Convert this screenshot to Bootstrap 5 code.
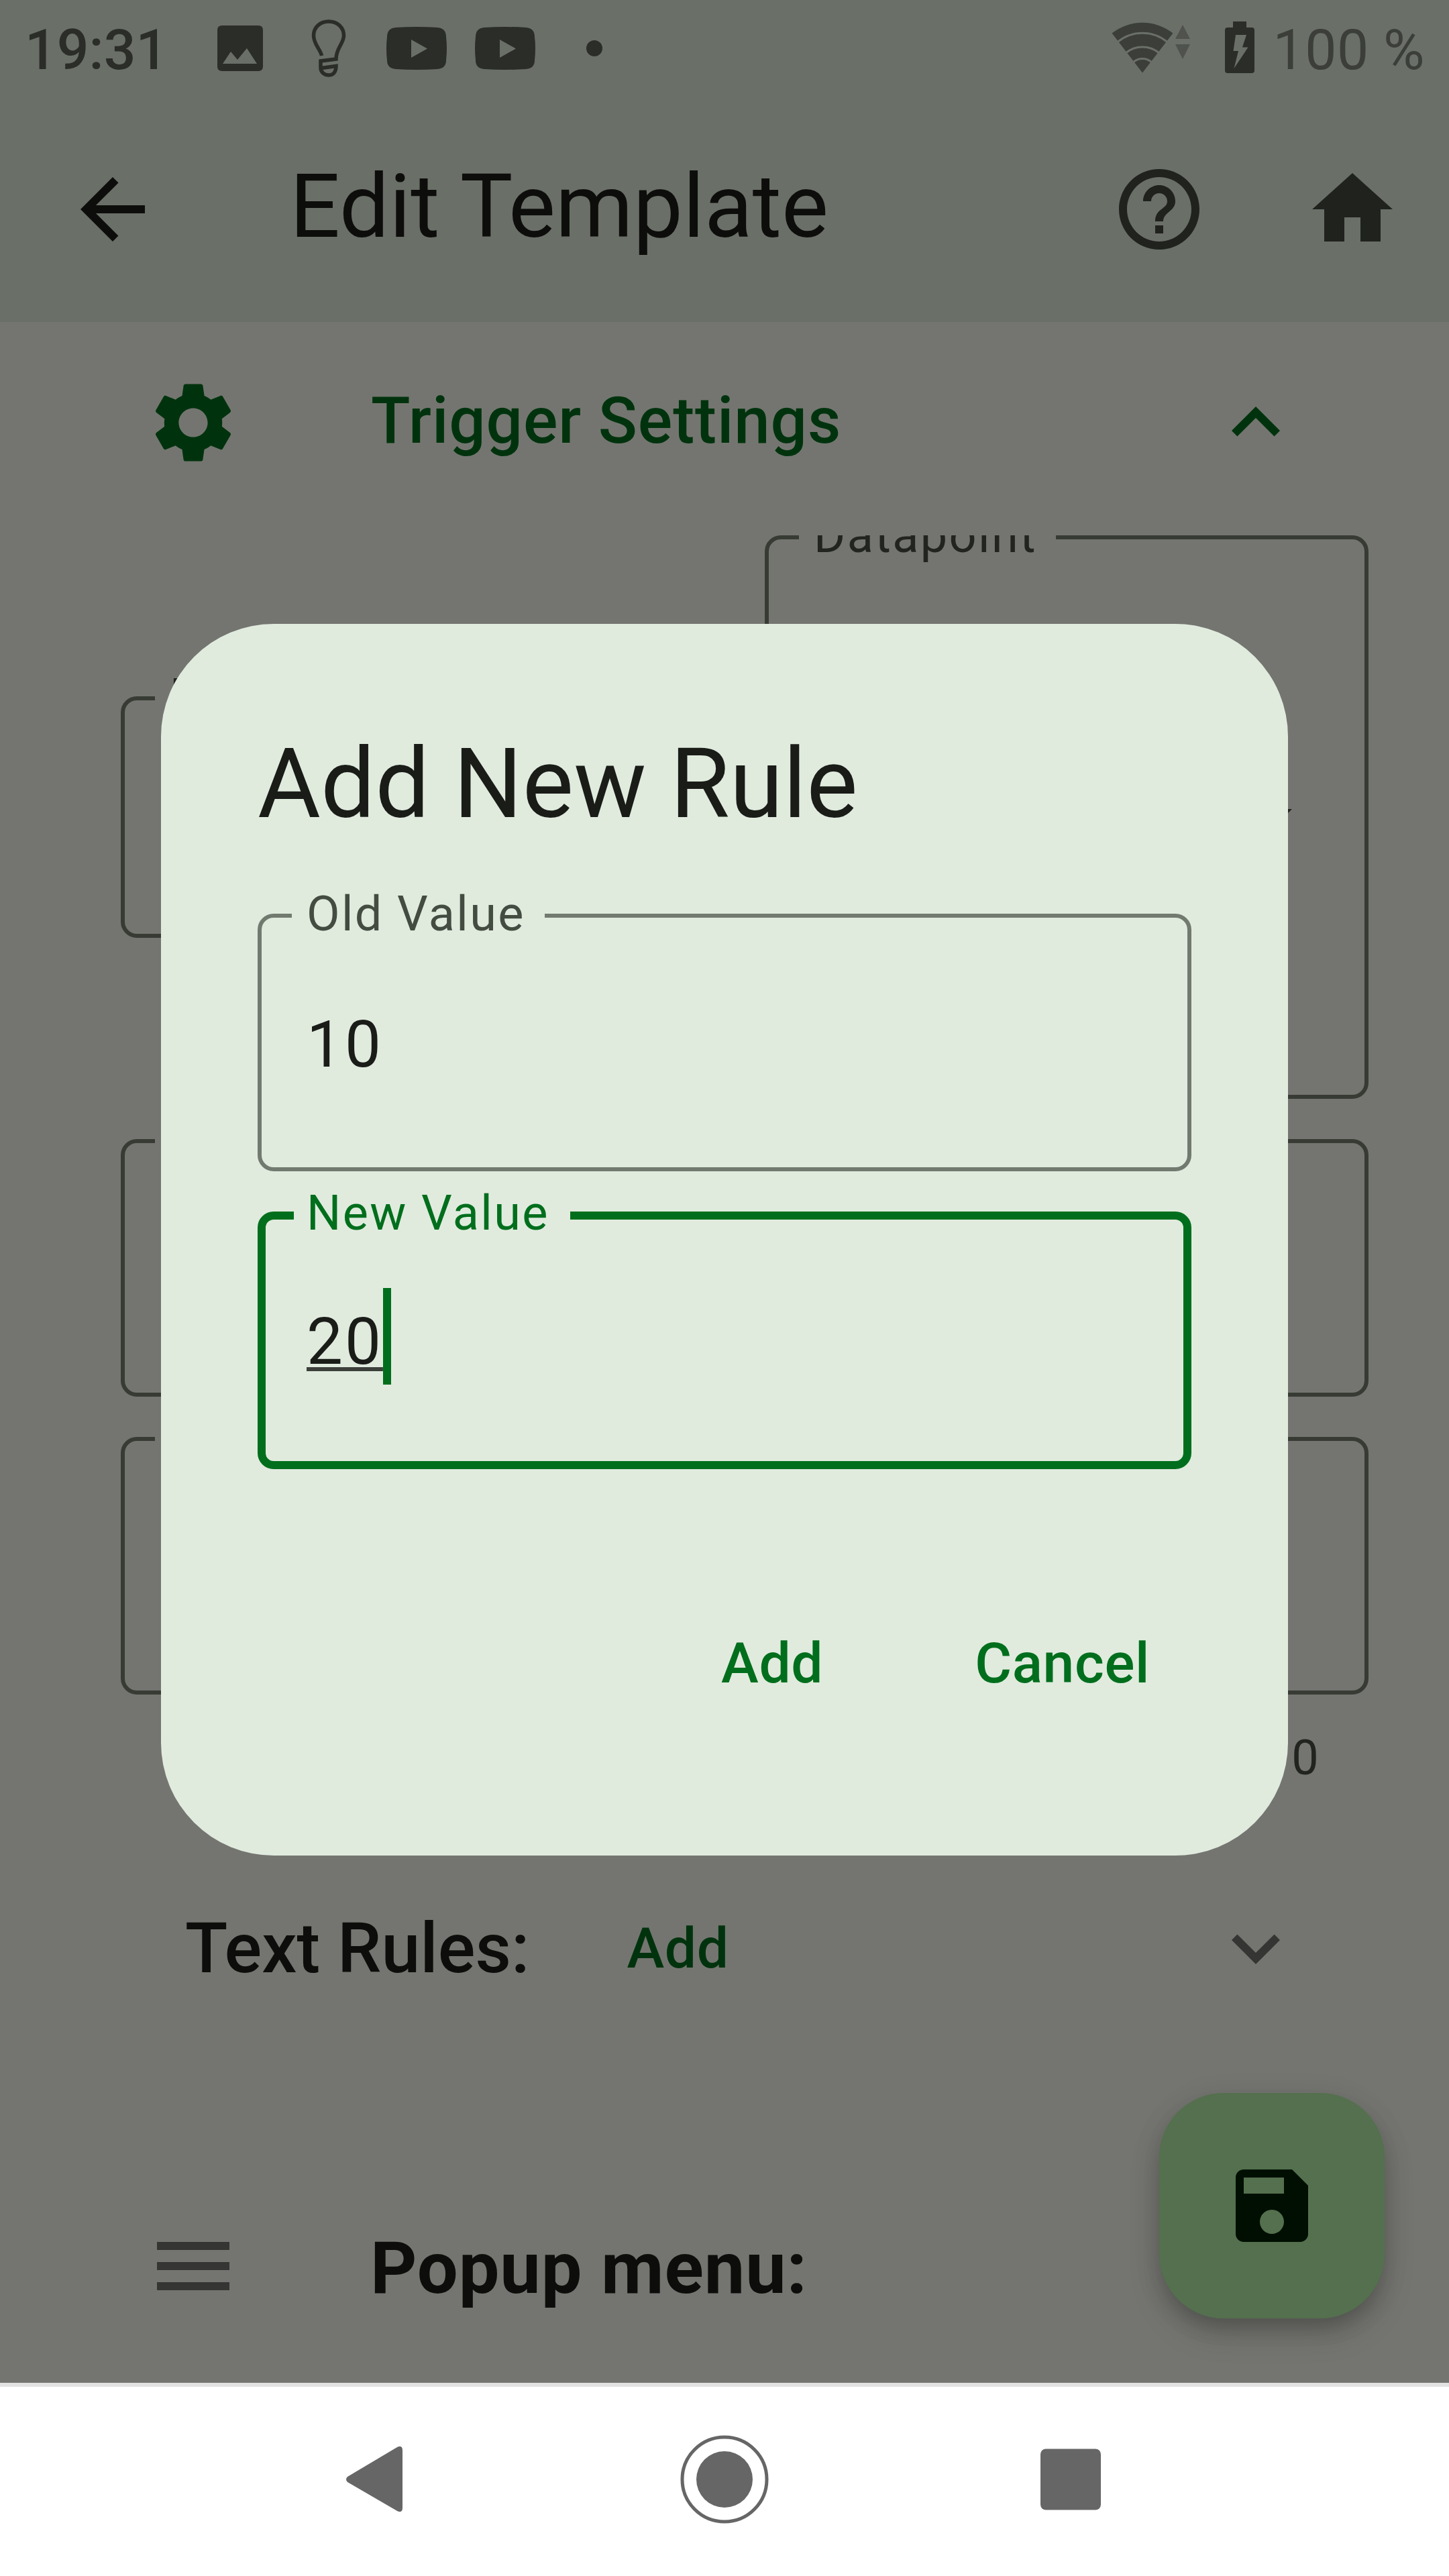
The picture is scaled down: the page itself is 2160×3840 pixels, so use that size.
<!DOCTYPE html>
<html lang="en">
<head>
<meta charset="utf-8">
<meta name="viewport" content="width=device-width, initial-scale=1">
<title>Edit Template</title>
<link href="https://cdn.jsdelivr.net/npm/bootstrap@5.3.0/dist/css/bootstrap.min.css" rel="stylesheet">
<style>
  :root { --body: #747570; --bar: #6a6f68; --sheet: #e0ebde; --green: #006e1c; --dimgreen: #00330d; }
  body { font-family: Roboto, "Liberation Sans", sans-serif; background: var(--body); width: 2160px; height: 3840px; overflow: hidden; color: #0d0e0b; line-height: 1.2; }
  svg { display: block; flex: none; }
  .ico { width: 144px; height: 144px; }
  .topbar { background: var(--bar); height: 480px; }
  .statusbar { height: 144px; padding: 0 36px 0 37px; color: #2b2d29; font-size: 84px; }
  .clock { font-weight: 500; padding-top: 7px; width: 287px; }
  .batt { color: #3b3e39; padding-top: 7px; margin-left: 22px; letter-spacing: .5px; }
  .appbar { height: 336px; padding: 0 72px 0 96px; }
  .home-ico { margin-left: 144px; }
  .page-title { font-size: 132px; font-weight: 400; margin: 0 0 0 192px; padding-bottom: 8px; }
  .section-head { height: 318px; padding: 0 216px 18px; color: var(--dimgreen); }
  .section-head .label-txt { font-size: 96px; font-weight: 500; margin-left: 193px; padding-bottom: 5px; letter-spacing: .9px; }
  .scroll-area { height: 2754px; overflow: hidden; padding: 0 120px 0 180px; }
  .field-pair { gap: 60px; margin-bottom: 60px; }
  .field { position: relative; border: 6px solid #373b34; border-radius: 24px; height: 384px; --cut: var(--body); }
  .field.mid { width: 900px; height: 360px; }
  .field.tall { width: 900px; height: 840px; padding-right: 66px; }
  .scroll-area > .field + .field { margin-top: 60px; }
  .field-label { position: absolute; left: 45px; top: -47px; line-height: 84px; font-size: 72px; letter-spacing: 2.4px; white-space: nowrap; color: #22241f; background: var(--cut); padding: 0 28px 0 22px; }
  .field-value { font-size: 96px; letter-spacing: 3px; color: #1a1c18; padding-left: 1px; }
  .counter { font-size: 72px; letter-spacing: 2.4px; line-height: 84px; margin-top: 53px; padding-right: 72px; color: #22241f; }
  .rules-row { height: 240px; margin-top: 121px; padding: 0 96px; }
  .rules-title { font-size: 104px; font-weight: 500; margin: 0; padding-top: 2px; }
  .rules-add { font-size: 84px; font-weight: 500; color: var(--dimgreen); padding-top: 3px; margin-left: 145px; letter-spacing: .6px; }
  .popup-row { height: 156px; margin-top: 276px; padding-left: 36px; }
  .popup-title { font-size: 108px; font-weight: 700; margin: 0 0 0 192px; padding-top: 8px; letter-spacing: .9px; }
  .fab { position: absolute; left: 1728px; top: 3120px; width: 336px; height: 336px; border-radius: 96px; background: #54704e; color: #010f02; box-shadow: 0 18px 30px -6px rgba(0,0,0,.18), 0 24px 50px rgba(0,0,0,.12), 0 6px 50px rgba(0,0,0,.06); }
  .sheet { position: absolute; left: 240px; top: 930px; width: 1680px; height: 1836px; border-radius: 168px; background: var(--sheet); padding: 144px; color: #1a1c18; }
  .sheet-title { font-size: 144px; line-height: 192px; font-weight: 400; margin: -1px 0 97px; }
  .sheet .field { --cut: var(--sheet); border-color: #727a6f; padding: 8px 66px 0; }
  .sheet .field-label { color: #444c42; padding-right: 29px; }
  .sheet .field.active { border: 12px solid var(--green); margin-top: 60px; padding: 6px 60px 0; }
  .sheet .active .field-label { color: var(--green); top: -51px; left: 42px; padding: 0 31px 0 19px; }
  .typed { padding: 0; margin-left: 1px; text-decoration: underline; text-decoration-color: #3c3f3a; text-decoration-thickness: 6px; text-underline-offset: 5px; text-decoration-skip-ink: none; }
  .caret { width: 12px; height: 144px; margin-bottom: 18px; background: var(--green); }
  .actions { margin-top: 170px; height: 240px; padding-right: 62px; gap: 226px; font-size: 84px; font-weight: 500; letter-spacing: .6px; color: var(--green); }
  .navbar-sys { height: 288px; background: #fff; border-top: 6px solid #e2e2e2; }
</style>
</head>
<body class="position-relative m-0">
<header class="topbar">
  <div class="statusbar d-flex align-items-center">
    <span class="clock">19:31</span>
    <svg width="600" height="144" viewBox="324 0 600 144" fill="currentColor">
      <path fill-rule="evenodd" d="M331 38H385q7 0 7 7V99q0 7-7 7H331q-7 0-7-7V45q0-7 7-7ZM332 95H383L368 72 354 89 344 77Z"/>
      <path fill="none" stroke="currentColor" stroke-width="5.500" d="M479.500 83C478 74 467.500 66 467.500 53C467.500 40 478 32 490 32S512.500 40 512.500 53C512.500 65 501 71 501 88L478 91V101C478 108 484 112 490 112S501 108 501 98.500L479 101.500"/>
      <path fill-rule="evenodd" d="M590 41Q621 39 652 41 665 42 665 55 667 72 665 90 665 102 652 103 621 105 590 103 577 102 577 90 575 72 577 55 577 42 590 41ZM613 59V86L637 72.500Z"/>
      <path fill-rule="evenodd" transform="translate(132)" d="M590 41Q621 39 652 41 665 42 665 55 667 72 665 90 665 102 652 103 621 105 590 103 577 102 577 90 575 72 577 55 577 42 590 41ZM613 59V86L637 72.500Z"/>
      <circle cx="886" cy="72" r="12"/>
    </svg>
    <svg class="ms-auto" width="220" height="144" viewBox="1656 0 220 144" fill="currentColor">
      <path fill="#3b3e39" d="M1657.500 49.500A74 74 0 0 1 1748.500 49.500L1703 108.500Z"/>
      <g fill="none" stroke="#6a6f68" stroke-width="3"><path d="M1666 62.500A58 58 0 0 1 1740 62.500M1678 79A39 39 0 0 1 1728 79M1689 93A20.500 20.500 0 0 1 1717 93"/></g>
      <path fill="#4f524d" d="M1752 58H1774L1763 37ZM1752 66H1774L1763 88Z"/>
      <path fill-rule="evenodd" d="M1838 32H1858V41H1866Q1870 41 1870 45V105Q1870 109 1866 109H1830Q1826 109 1826 105V45Q1826 41 1830 41H1838ZM1842 52L1838.500 76H1846L1839.500 102 1860.500 70.500H1852L1858 52Z"/>
    </svg>
    <span class="batt">100 %</span>
  </div>
  <div class="appbar d-flex align-items-center">
    <svg class="ico" viewBox="0 0 24 24" fill="#0d0e0b"><path d="M20 11H7.830l5.590-5.590L12 4l-8 8 8 8 1.410-1.410L7.830 13H20v-2z"/></svg>
    <h1 class="page-title">Edit Template</h1>
    <svg class="ico ms-auto" viewBox="0 0 24 24" fill="#20221e"><path d="M11 18h2v-2h-2v2zm1-16C6.480 2 2 6.480 2 12s4.480 10 10 10 10-4.480 10-10S17.520 2 12 2zm0 18c-4.410 0-8-3.590-8-8s3.590-8 8-8 8 3.590 8 8-3.590 8-8 8zm0-14c-2.210 0-4 1.790-4 4h2c0-1.100.9-2 2-2s2 .9 2 2c0 2-3 1.750-3 5h2c0-2.250 3-2.500 3-5 0-2.210-1.790-4-4-4z"/></svg>
    <svg class="ico home-ico" viewBox="0 0 24 24" fill="#20221e"><path d="M10 20v-6h4v6h5v-8h3L12 3 2 12h3v8z"/></svg>
  </div>
</header>

<main>
  <div class="section-head d-flex align-items-center">
    <svg class="ico" viewBox="0 0 24 24" fill="currentColor"><path d="M19.140 12.940c.04-.3.060-.61.060-.94 0-.32-.02-.64-.07-.94l2.030-1.580c.18-.14.230-.41.120-.61l-1.920-3.320c-.12-.22-.37-.29-.59-.22l-2.390.96c-.5-.38-1.030-.7-1.620-.94L14.400 2.810c-.04-.24-.24-.41-.48-.41h-3.840c-.24 0-.43.170-.47.410L9.250 5.350c-.59.240-1.130.570-1.620.94L5.240 5.330c-.22-.08-.47 0-.59.220L2.740 8.870c-.12.210-.08.470.12.610l2.030 1.580c-.05.3-.09.630-.09.940s.02.640.07.940l-2.030 1.580c-.18.140-.23.410-.12.610l1.920 3.320c.12.220.37.290.59.220l2.390-.96c.5.380 1.030.7 1.620.94l.36 2.540c.05.240.24.410.48.410h3.840c.24 0 .44-.17.470-.41l.36-2.540c.59-.24 1.130-.56 1.620-.94l2.390.96c.22.080.47 0 .59-.22l1.920-3.320c.12-.22.070-.47-.12-.61l-2.010-1.580zM12 15.600c-1.980 0-3.600-1.620-3.600-3.600s1.620-3.600 3.600-3.600 3.600 1.620 3.600 3.600-1.620 3.600-3.600 3.600z"/></svg>
    <span class="label-txt">Trigger Settings</span>
    <svg class="ico ms-auto" viewBox="0 0 24 24" fill="currentColor"><path d="M12 8l-6 6 1.410 1.410L12 10.830l4.590 4.580L18 14z"/></svg>
  </div>

  <div class="scroll-area">
    <div class="field-pair d-flex align-items-center">
      <div class="field mid"><span class="field-label">Device</span></div>
      <div class="field tall d-flex align-items-center justify-content-end">
        <span class="field-label">Datapoint</span>
        <svg class="ico" viewBox="0 0 24 24" fill="#20221e"><path d="M7 10l5 5 5-5z"/></svg>
      </div>
    </div>
    <div class="field"><span class="field-label">Name</span></div>
    <div class="field"><span class="field-label">Text</span></div>
    <div class="counter text-end">0</div>
    <div class="rules-row d-flex align-items-center">
      <h2 class="rules-title">Text Rules:</h2>
      <span class="rules-add">Add</span>
      <svg class="ico ms-auto" viewBox="0 0 24 24" fill="#353633"><path d="M16.590 8.590L12 13.170 7.410 8.590 6 10l6 6 6-6z"/></svg>
    </div>
    <div class="popup-row d-flex align-items-center">
      <svg class="ico" viewBox="0 0 24 24" fill="#353633"><path d="M3 18h18v-2H3v2zm0-5h18v-2H3v2zm0-7v2h18V6H3z"/></svg>
      <h2 class="popup-title">Popup menu:</h2>
    </div>
  </div>
</main>

<footer class="navbar-sys d-flex">
  <svg width="2160" height="282" viewBox="0 3558 2160 282" fill="#666">
    <path d="M518 3692L592 3648Q600 3644 600 3653V3738Q600 3747 592 3743L518 3700Q514 3696 518 3692Z"/>
    <circle cx="1080" cy="3696" r="42"/><circle cx="1080" cy="3696" r="63" fill="none" stroke="#666" stroke-width="5"/>
    <rect x="1551" y="3650.500" width="90" height="91" rx="8"/>
  </svg>
</footer>

<div class="fab d-flex align-items-center justify-content-center">
  <svg class="ico" viewBox="0 0 24 24" fill="currentColor"><path d="M17 3H5c-1.110 0-2 .9-2 2v14c0 1.100.89 2 2 2h14c1.100 0 2-.9 2-2V7l-4-4zm-5 16c-1.660 0-3-1.340-3-3s1.340-3 3-3 3 1.340 3 3-1.340 3-3 3zm3-10H5V5h10v4z"/></svg>
</div>

<section class="sheet" role="dialog">
  <h2 class="sheet-title">Add New Rule</h2>
  <div class="field d-flex align-items-center"><span class="field-label">Old Value</span><span class="field-value">10</span></div>
  <div class="field active d-flex align-items-center"><span class="field-label">New Value</span><span class="field-value typed">20</span><span class="caret"></span></div>
  <div class="actions d-flex justify-content-end align-items-center"><span>Add</span><span>Cancel</span></div>
</section>
<script src="https://cdn.jsdelivr.net/npm/bootstrap@5.3.0/dist/js/bootstrap.bundle.min.js"></script>
</body>
</html>
